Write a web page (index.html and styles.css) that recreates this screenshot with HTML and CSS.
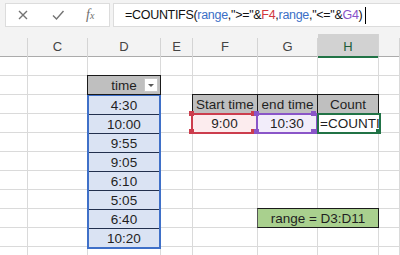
FILE: index.html
```html
<!DOCTYPE html>
<html lang="en">
<head>
    <title>COUNTIFS time range</title>
    <link rel="stylesheet" href="styles.css">
</head>
<body>
    <div class="formula-bar">
        <div class="fx-buttons">
            <svg class="btn-icon" viewBox="0 0 14 14"><path d="M3 3 L11 11 M11 3 L3 11" /></svg>
            <svg class="btn-icon" viewBox="0 0 14 14"><path d="M2 7.5 L5.5 11 L12.5 3" /></svg>
            <span class="fx">f<small>x</small></span>
        </div>
        <div class="formula-input">
            <span>=COUNTIFS(</span><span class="ref-blue">range</span><span>,"&gt;="&amp;</span><span class="ref-red">F4</span><span>,</span><span class="ref-blue">range</span><span>,"&lt;="&amp;</span><span class="ref-purple">G4</span><span>)</span><span class="caret"></span>
        </div>
    </div>

    <div class="col-heads">
        <div></div>
        <div>C</div>
        <div>D</div>
        <div>E</div>
        <div>F</div>
        <div>G</div>
        <div class="active">H</div>
        <div></div>
    </div>

    <div class="sheet">
        <div class="vline c1"></div>
        <div class="vline c2"></div>
        <div class="vline c3"></div>
        <div class="vline c4"></div>
        <div class="vline c5"></div>
        <div class="vline c6"></div>
        <div class="vline c7"></div>
        <div class="vline c8"></div>

        <div class="cell time-head">time<span class="filter-btn"></span></div>

        <div class="range-box">
            <div class="cell">4:30</div>
            <div class="cell">10:00</div>
            <div class="cell">9:55</div>
            <div class="cell">9:05</div>
            <div class="cell">6:10</div>
            <div class="cell">5:05</div>
            <div class="cell">6:40</div>
            <div class="cell">10:20</div>
        </div>

        <div class="cell tbl-head col-f">Start time</div>
        <div class="cell tbl-head col-g">end time</div>
        <div class="cell tbl-head col-h">Count</div>

        <div class="cell ref ref-f">9:00</div>
        <div class="cell ref ref-g">10:30</div>
        <div class="cell editing"><span class="edit-text">=COUNTIFS(range,"&gt;="&amp;F4,range,"&lt;="&amp;G4)</span></div>

        <div class="cell range-label">range = D3:D11</div>
    </div>
</body>
</html>
```

FILE: styles.css
```css
body {
    margin: 0;
    width: 400px;
    height: 255px;
    overflow: hidden;
    background-color: #fff;
    font-family: "Liberation Sans", Arial, sans-serif;
    color: #1f1f1f;
}

/* formula bar */
.formula-bar {
    height: 34px;
    box-sizing: border-box;
    background-color: #f3f3f3;
    display: flex;
    gap: 3px;
    padding: 3px 0 0 5px;
}

.fx-buttons {
    width: 105px;
    height: 24px;
    box-sizing: border-box;
    background-color: #fff;
    border: 1px solid #dcdcdc;
    display: flex;
    align-items: center;
    gap: 21px;
    padding-left: 10px;
}

.btn-icon {
    width: 14px;
    height: 14px;
    fill: none;
    stroke: #737373;
    stroke-width: 1.4;
}

.fx {
    font-family: "Liberation Serif", serif;
    font-style: italic;
    font-size: 14px;
    color: #6f6f6f;
}

.fx small {
    font-size: 10px;
}

.formula-input {
    flex: 1;
    height: 24px;
    box-sizing: border-box;
    background-color: #fff;
    border: 1px solid #dcdcdc;
    border-right: none;
    padding-left: 11px;
    display: flex;
    align-items: center;
    font-size: 12.5px;
    letter-spacing: -0.3px;
    white-space: nowrap;
    color: #111;
}

.ref-blue { color: #3b6fc6; }
.ref-red { color: #d2373c; }
.ref-purple { color: #8853c9; }

.caret {
    width: 1px;
    height: 17px;
    margin-left: 3px;
    background-color: #000;
}

/* column headers */
.col-heads {
    display: grid;
    grid-template-columns: 28px 60px 73px 32px 65px 60px 61px 21px;
    height: 22px;
    background-color: #f3f3f3;
    border-bottom: 1px solid #ababab;
}

.col-heads div {
    margin-top: 4px;
    border-right: 1px solid #d4d4d4;
    text-align: center;
    font-size: 13px;
    line-height: 18px;
    color: #444;
}

.col-heads .active {
    background-color: #d2d2d2;
    border-bottom: 2px solid #217346;
    margin-top: 0;
    padding-top: 4px;
    color: #1e5e3a;
}

/* sheet grid */
.sheet {
    display: grid;
    grid-template-columns: 28px 60px 73px 32px 65px 60px 61px 21px;
    grid-template-rows: repeat(11, 19px);
    background: repeating-linear-gradient(to bottom, #fff 0 18px, #dadada 18px 19px);
    font-size: 13.5px;
}

.vline {
    grid-row: 1 / -1;
    border-right: 1px solid #dadada;
}

.c1 { grid-column: 1; }
.c2 { grid-column: 2; }
.c3 { grid-column: 3; }
.c4 { grid-column: 4; }
.c5 { grid-column: 5; }
.c6 { grid-column: 6; }
.c7 { grid-column: 7; }
.c8 { grid-column: 8; }

.cell {
    display: flex;
    align-items: center;
    justify-content: center;
    white-space: nowrap;
    box-sizing: border-box;
}

.time-head {
    grid-column: 3;
    grid-row: 2;
    margin: -1px 0 0 -1px;
    position: relative;
    background-color: #bfbfbf;
    border: 1px solid #1a1a1a;
}

.filter-btn {
    position: absolute;
    right: 2px;
    top: 2px;
    width: 14px;
    height: 14px;
    box-sizing: border-box;
    background-color: #fff;
    border: 1px solid #c8c8c8;
}

.filter-btn::after {
    content: "";
    position: absolute;
    left: 3px;
    top: 5px;
    border-left: 3px solid transparent;
    border-right: 3px solid transparent;
    border-top: 3px solid #595959;
}

.range-box {
    grid-column: 3;
    grid-row: 3 / 11;
    margin: -1px 0 -2px -1px;
    border: 2px solid #3f70c8;
    display: flex;
    flex-direction: column;
    background-color: #dae3f3;
}

.range-box .cell {
    flex: 1;
    border-bottom: 1px solid #22304d;
}

.range-box .cell:last-child {
    border-bottom: none;
}

.tbl-head {
    grid-row: 3;
    margin: -1px 0 0 -1px;
    background-color: #bfbfbf;
    border: 1px solid #1a1a1a;
}

.col-f { grid-column: 5; }
.col-g { grid-column: 6; }
.col-h { grid-column: 7; }

/* reference highlights around F4 and G4 */
.ref {
    grid-row: 4;
    margin: -1px 0 -1px -2px;
    position: relative;
    border: 2px solid;
}

.ref::before {
    content: "";
    position: absolute;
    left: -4px;
    top: -4px;
    width: 5px;
    height: 5px;
}

.ref-f {
    grid-column: 5;
    border-color: #cc3d4d;
    background-color: #fcecee;
}

.ref-f::before {
    background-color: #cc3d4d;
    box-shadow: 62px 0 #cc3d4d, 0 18px #cc3d4d, 62px 18px #cc3d4d;
}

.ref-g {
    grid-column: 6;
    border-color: #8a55c8;
    background-color: #f2edfa;
}

.ref-g::before {
    background-color: #8a55c8;
    box-shadow: 57px 0 #8a55c8, 0 18px #8a55c8, 57px 18px #8a55c8;
}

.editing {
    grid-column: 7;
    grid-row: 4;
    margin: -1px -2px -1px -1px;
    position: relative;
    justify-content: flex-start;
    padding-left: 1px;
    overflow: hidden;
    background-color: #fff;
    border: 2px solid #217346;
}

.edit-text {
    overflow: hidden;
    max-width: 100%;
}

.editing::after {
    content: "";
    position: absolute;
    right: -2px;
    bottom: -2px;
    width: 5px;
    height: 5px;
    background-color: #217346;
    border-left: 1px solid #fff;
    border-top: 1px solid #fff;
}

.range-label {
    grid-column: 6 / 8;
    grid-row: 9;
    margin: -1px 0 0 -1px;
    background-color: #a9d08e;
    border: 1px solid #1a1a1a;
    border-left-color: #555;
}
```
